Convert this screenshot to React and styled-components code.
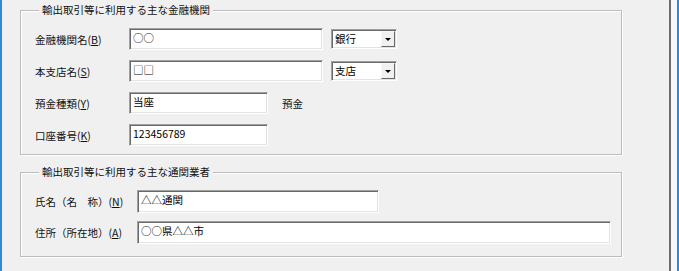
import React from 'react'
import styled, { createGlobalStyle } from 'styled-components'

const Global = createGlobalStyle`
  body {
    margin: 0;
    background: #f0f0f0;
    font-family: "Noto Sans CJK JP", "Noto Sans", sans-serif;
  }
`

const Frame = styled.div`
  display: flex;
  width: 679px;
  height: 271px;
  overflow: hidden;
  background: #f0f0f0;
  border-left: 2px solid #2a8be0;
  box-sizing: border-box;
`

const Main = styled.div`
  flex: 1;
  padding: 3px 0 0 18px;
  display: flex;
  flex-direction: column;
`

const Edge = styled.div`
  width: 6px;
  background: #f8f8f8;
  border-left: 2px solid #6d6d6d;
  border-right: 2px solid #2a8be0;
`

const Group = styled.fieldset`
  width: 602px;
  box-sizing: border-box;
  margin: ${p => p.$top || 0}px 0 0;
  padding: 11px 0 ${p => p.$bottom}px 14px;
  border: 1px solid #bcbcbc;
  box-shadow: inset 1px 1px 0 #fff, 1px 1px 0 #fff;
  display: flex;
  flex-direction: column;
  gap: ${p => p.$gap}px;
`

const Legend = styled.legend`
  margin-left: 4px;
  padding: 0 3px;
  font-size: 10.5px;
  line-height: 14px;
  color: #111;
  background: #f0f0f0;
`

const Row = styled.div`
  display: flex;
  align-items: center;
  height: ${p => p.$h || 22}px;
`

const Label = styled.div`
  width: ${p => p.$w}px;
  flex: none;
  font-size: 10.5px;
  color: #111;
  white-space: nowrap;
`

const Mnemonic = styled.u`
  text-decoration: underline;
`

const Field = styled.div`
  width: ${p => p.$w}px;
  height: 100%;
  box-sizing: border-box;
  flex: none;
  background: #fff;
  border: 1px solid;
  border-color: #a0a0a0 #fff #fff #a0a0a0;
  box-shadow: inset 1px 1px 0 #696969, inset -1px -1px 0 #e3e3e3;
  padding: 2px 3px;
  font-size: 10.5px;
  line-height: 13px;
  color: #000;
  white-space: nowrap;
`

const Combo = styled.div`
  display: flex;
  width: 66px;
  height: 20px;
  box-sizing: border-box;
  margin: 1px 0 0 8px;
  align-self: flex-start;
  background: #fff;
  border: 1px solid;
  border-color: #a0a0a0 #fff #fff #a0a0a0;
  box-shadow: inset 1px 1px 0 #696969, inset -1px -1px 0 #e3e3e3;
  padding: 1px;
`

const ComboText = styled.div`
  flex: 1;
  padding: 1px 0 0 2px;
  font-size: 10.5px;
  line-height: 14px;
  color: #000;
`

const ComboButton = styled.div`
  width: 14px;
  display: flex;
  align-items: center;
  justify-content: center;
  box-sizing: border-box;
  background: #f0f0f0;
  border: 1px solid;
  border-color: #f8f8f8 #696969 #696969 #f8f8f8;
  &::after {
    content: '';
    border-left: 3px solid transparent;
    border-right: 3px solid transparent;
    border-top: 3px solid #000;
  }
`

const Suffix = styled.div`
  margin-left: 14px;
  font-size: 10.5px;
  color: #111;
`

const Caption = ({ w, text, k }) => (
  <Label $w={w}>
    {text}(<Mnemonic>{k}</Mnemonic>)
  </Label>
)

export default function App() {
  return (
    <>
      <Global />
      <Frame>
        <Main>
          <Group $gap={10} $bottom={8}>
            <Legend>輸出取引等に利用する主な金融機関</Legend>
            <Row>
              <Caption w={94} text="金融機関名" k="B" />
              <Field $w={194}>○○</Field>
              <Combo>
                <ComboText>銀行</ComboText>
                <ComboButton />
              </Combo>
            </Row>
            <Row>
              <Caption w={94} text="本支店名" k="S" />
              <Field $w={194}>□□</Field>
              <Combo>
                <ComboText>支店</ComboText>
                <ComboButton />
              </Combo>
            </Row>
            <Row>
              <Caption w={94} text="預金種類" k="Y" />
              <Field $w={139}>当座</Field>
              <Suffix>預金</Suffix>
            </Row>
            <Row>
              <Caption w={94} text="口座番号" k="K" />
              <Field $w={139}>123456789</Field>
            </Row>
          </Group>
          <Group $top={10} $gap={8} $bottom={12}>
            <Legend>輸出取引等に利用する主な通関業者</Legend>
            <Row $h={23}>
              <Caption w={102} text="氏名（名　称）" k="N" />
              <Field $w={242}>△△通関</Field>
            </Row>
            <Row $h={23}>
              <Caption w={102} text="住所（所在地）" k="A" />
              <Field $w={474}>○○県△△市</Field>
            </Row>
          </Group>
        </Main>
        <Edge />
      </Frame>
    </>
  )
}
